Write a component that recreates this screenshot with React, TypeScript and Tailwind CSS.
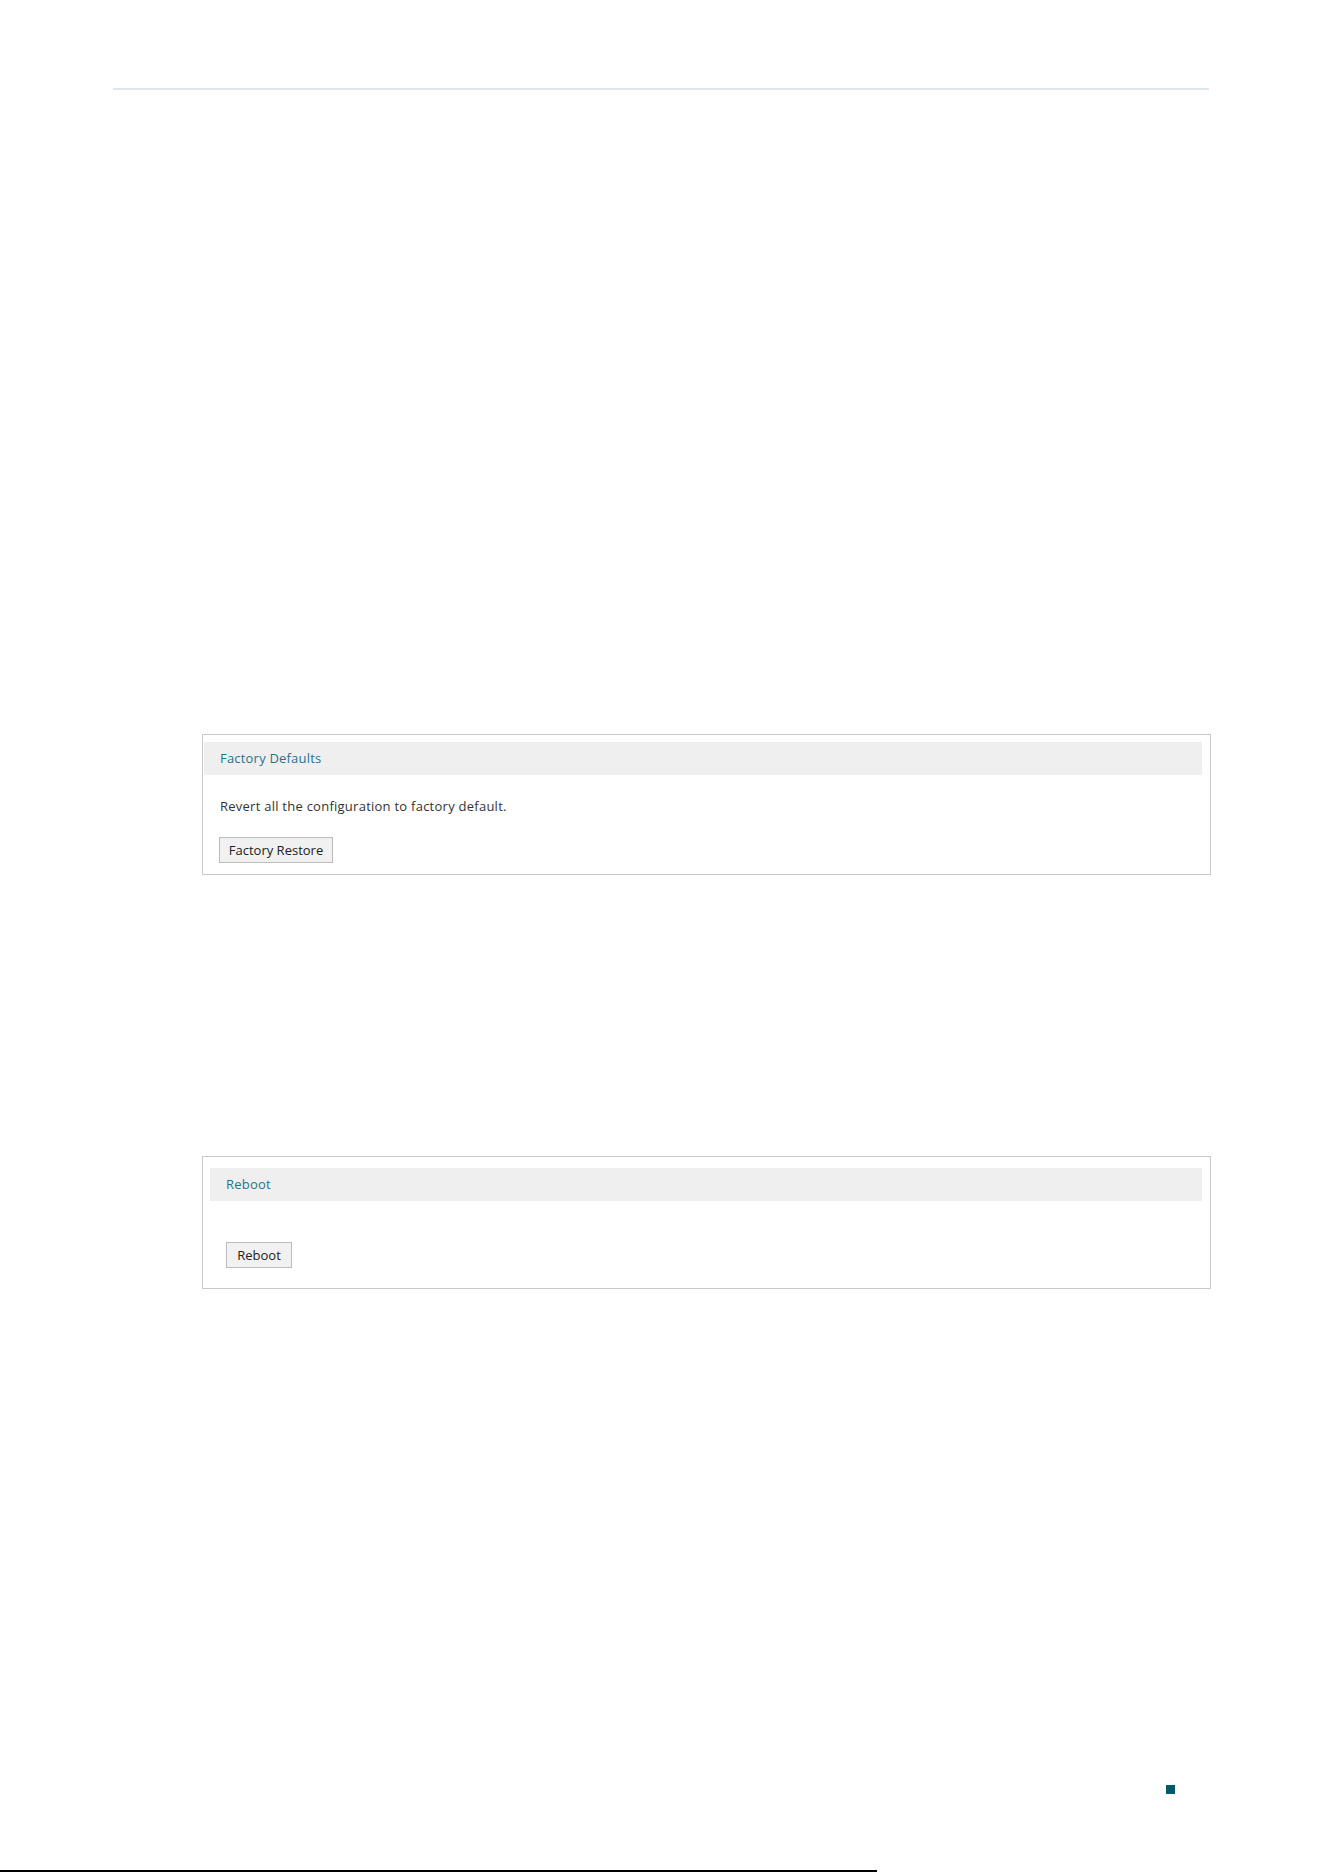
const Panel = ({
  title,
  headerClass,
  children,
  className,
}: {
  title: string;
  headerClass: string;
  children: React.ReactNode;
  className: string;
}) => {
  return (
    <div className={`w-[1009px] border border-[#c9c9c9] bg-white ${className}`}>
      <div
        className={`flex h-[33px] items-center bg-[#efefef] pl-[16px] text-[13px] tracking-[0.2px] text-[#25748c] ${headerClass}`}
      >
        {title}
      </div>
      {children}
    </div>
  );
};

const Button = ({ label, className }: { label: string; className?: string }) => (
  <button
    type="button"
    className={`h-[26px] border border-[#bcbcbc] bg-[#f1f1f1] px-[7px] text-[13px] leading-[16px] text-[#222] ${className ?? ""}`}
  >
    {label}
  </button>
);

const App = () => {
  return (
    <div
      className="relative h-[1872px] w-[1324px] overflow-hidden bg-white"
      style={{ fontFamily: '"Open Sans", "Noto Sans", sans-serif' }}
    >
      {/* header rule */}
      <div className="ml-[113px] mt-[88px] h-[2px] w-[1096px] bg-[#dde7eb]" />

      <Panel
        title="Factory Defaults"
        headerClass="mt-[7px] ml-[1px] mr-[8px]"
        className="ml-[202px] mt-[644px] pb-[11px]"
      >
        <p className="ml-[17px] mt-[23px] text-[13px] leading-[16px] tracking-[0.25px] text-[#333]">
          Revert all the configuration to factory default.
        </p>
        <Button label="Factory Restore" className="ml-[16px] mt-[23px] w-[114px]" />
      </Panel>

      <Panel
        title="Reboot"
        headerClass="mt-[11px] ml-[7px] mr-[8px]"
        className="ml-[202px] mt-[281px] pb-[20px]"
      >
        <Button label="Reboot" className="ml-[23px] mt-[41px] w-[66px]" />
      </Panel>

      {/* page marker */}
      <div className="ml-[1166px] mt-[496px] h-[9px] w-[9px] bg-[#02596b]" />

      {/* footer rule */}
      <div className="absolute bottom-0 left-0 h-[2px] w-[877px] bg-black" />
    </div>
  );
};

export default App;
